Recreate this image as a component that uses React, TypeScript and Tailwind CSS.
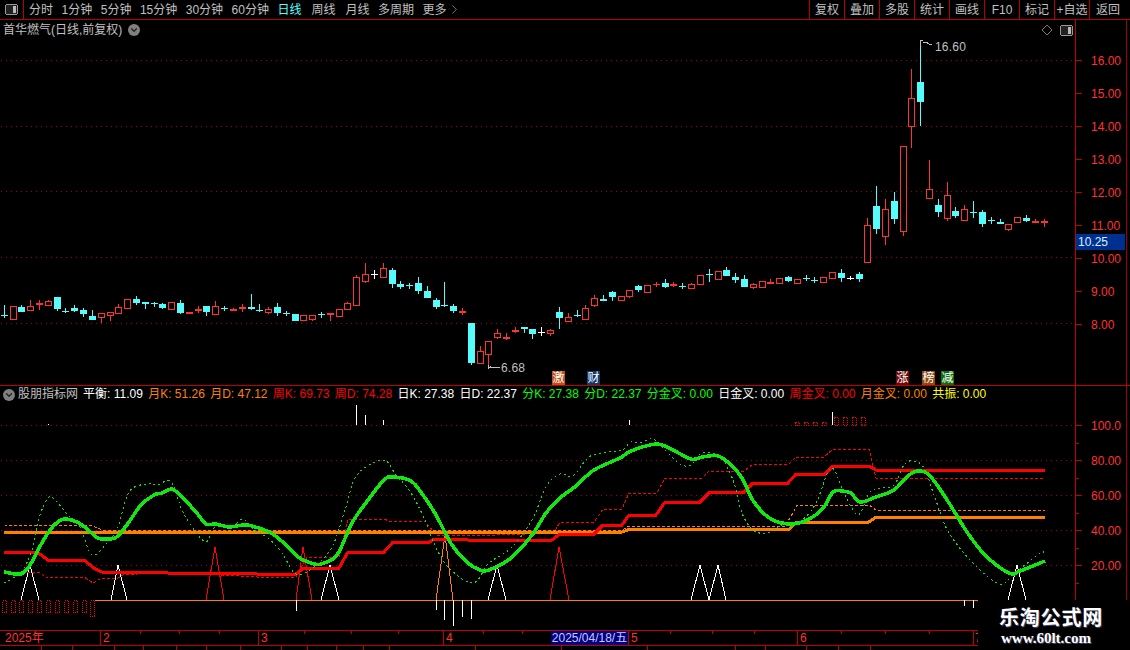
import { ChevronDown, ChevronRight } from "lucide-react";

type Candle = [number, number, number, number, number, string];

// x, bodyTop, bodyBottom, wickTop, wickBottom, c = cyan / r = red / w = white
const candles: Candle[] = [
  [4, 315, 316, 305, 318, "c"], [13, 306, 319, 306, 319, "r"], [21, 307, 312, 305, 312, "c"], [30, 306, 310, 300, 310, "r"],
  [39, 303, 305, 300, 310, "r"], [48, 301, 305, 300, 306, "r"], [57, 297, 309, 297, 311, "c"], [65, 311, 311, 308, 313, "c"],
  [74, 308, 311, 305, 312, "c"], [83, 310, 314, 308, 317, "c"], [92, 316, 320, 310, 320, "c"], [101, 313, 317, 313, 323, "r"],
  [110, 312, 315, 312, 321, "r"], [118, 307, 313, 304, 313, "r"], [127, 299, 308, 299, 308, "r"], [136, 299, 303, 296, 305, "c"],
  [145, 302, 304, 302, 309, "c"], [154, 303, 303, 302, 307, "c"], [162, 304, 308, 303, 309, "c"], [171, 302, 309, 302, 310, "r"],
  [180, 303, 313, 300, 314, "c"], [189, 312, 314, 312, 314, "r"], [198, 309, 311, 306, 313, "r"], [206, 306, 312, 306, 316, "c"],
  [215, 306, 314, 301, 314, "r"], [224, 308, 308, 306, 311, "c"], [233, 309, 311, 308, 311, "r"], [242, 307, 309, 304, 312, "r"],
  [251, 307, 309, 294, 310, "c"], [259, 310, 310, 304, 312, "c"], [268, 309, 312, 307, 314, "r"], [277, 307, 313, 303, 316, "c"],
  [286, 313, 313, 311, 316, "c"], [295, 314, 321, 314, 321, "c"], [303, 315, 320, 315, 320, "r"], [312, 315, 319, 315, 321, "r"],
  [321, 314, 314, 312, 318, "c"], [330, 313, 315, 313, 321, "r"], [339, 309, 316, 309, 316, "r"], [347, 303, 309, 302, 309, "r"],
  [356, 277, 305, 275, 306, "r"], [365, 274, 281, 263, 283, "r"], [374, 274, 274, 270, 279, "w"], [383, 268, 277, 263, 278, "r"],
  [392, 270, 284, 268, 288, "c"], [400, 284, 287, 281, 289, "c"], [409, 285, 285, 283, 289, "c"], [418, 283, 291, 277, 294, "c"],
  [427, 291, 298, 286, 298, "c"], [436, 300, 307, 298, 309, "c"], [444, 305, 305, 282, 307, "c"], [453, 306, 311, 304, 313, "c"],
  [462, 311, 313, 308, 315, "r"], [471, 323, 363, 323, 365, "c"], [480, 351, 363, 346, 363, "r"], [488, 341, 354, 341, 367, "r"],
  [497, 333, 337, 329, 339, "r"], [506, 337, 339, 333, 340, "r"], [515, 330, 332, 327, 333, "r"], [524, 327, 329, 327, 333, "c"],
  [532, 329, 334, 329, 339, "c"], [541, 332, 332, 327, 336, "w"], [550, 330, 333, 329, 336, "r"], [559, 312, 318, 307, 329, "c"],
  [568, 317, 321, 313, 321, "r"], [577, 315, 315, 310, 317, "c"], [585, 308, 319, 305, 319, "r"], [594, 298, 305, 295, 307, "r"],
  [603, 299, 301, 295, 301, "c"], [612, 292, 297, 291, 301, "c"], [621, 296, 300, 296, 300, "r"], [629, 290, 296, 290, 298, "r"],
  [638, 286, 290, 285, 292, "c"], [647, 285, 292, 285, 293, "r"], [656, 284, 284, 282, 287, "r"], [665, 283, 287, 279, 288, "c"],
  [673, 284, 286, 282, 287, "r"], [682, 286, 286, 283, 289, "c"], [691, 284, 288, 283, 288, "r"], [700, 275, 284, 275, 284, "r"],
  [709, 274, 274, 269, 282, "c"], [718, 271, 279, 271, 280, "r"], [726, 270, 276, 267, 276, "c"], [735, 277, 280, 273, 283, "c"],
  [744, 279, 287, 275, 287, "c"], [753, 284, 287, 283, 289, "r"], [762, 281, 287, 281, 288, "r"], [770, 282, 284, 279, 284, "r"],
  [779, 278, 283, 278, 284, "r"], [788, 277, 281, 276, 282, "c"], [797, 279, 283, 279, 283, "r"], [806, 278, 278, 275, 281, "c"],
  [814, 280, 280, 277, 283, "c"], [823, 277, 282, 277, 282, "r"], [832, 272, 278, 272, 279, "r"], [841, 273, 278, 269, 282, "c"],
  [850, 278, 278, 276, 280, "w"], [859, 274, 279, 272, 282, "c"], [867, 225, 262, 218, 262, "r"], [876, 206, 229, 186, 234, "c"],
  [885, 209, 236, 199, 245, "r"], [894, 201, 219, 192, 224, "c"], [903, 146, 231, 146, 236, "r"], [911, 98, 126, 69, 148, "r"],
  [920, 82, 102, 40, 126, "c"], [929, 189, 198, 160, 198, "r"], [938, 205, 212, 199, 217, "c"], [947, 195, 218, 182, 221, "r"],
  [955, 211, 216, 207, 218, "c"], [964, 209, 220, 205, 221, "r"], [973, 212, 212, 201, 218, "c"], [982, 212, 224, 210, 227, "c"],
  [991, 220, 220, 217, 224, "c"], [1000, 222, 224, 219, 224, "c"], [1008, 224, 229, 224, 231, "r"], [1017, 217, 222, 217, 222, "r"],
  [1026, 218, 221, 215, 222, "c"], [1035, 221, 223, 219, 223, "r"], [1044, 221, 223, 219, 227, "r"],
];

const colors: Record<string, string> = { c: "#54fcfc", r: "#ff3232", w: "#ffffff" };

const greenBold =
  "4,572 21,574 30,565 39,548 50,530 59,521 66,519 77,522 86,528 98,538 111,539 118,536 129,522 141,505 154,495 162,493 172,489 182,497 196,512 206,524 216,524 229,527 243,525 252,526 271,533 286,545 298,557 311,563 321,564 337,555 352,523 368,500 384,480 393,477 411,481 423,495 436,515 452,545 468,563 480,570 489,570 511,558 532,535 546,513 560,498 576,486 594,470 620,458 631,451 656,444 669,448 691,459 702,457 718,456 731,465 742,478 754,502 771,519 793,524 811,518 824,507 833,492 842,491 851,493 860,502 876,497 894,490 909,475 920,471 931,477 949,503 967,532 985,555 1009,573 1020,571 1045,561";
const greenThin =
  "4,583 21,572 32,550 39,518 48,498 54,499 68,515 80,527 92,555 107,543 118,527 129,492 146,484 157,485 171,482 182,510 193,528 206,542 214,528 232,527 243,519 254,530 268,538 282,553 296,574 314,567 332,547 345,510 357,475 383,460 396,475 411,493 425,520 434,543 448,567 473,583 489,563 511,548 532,520 546,487 560,474 573,476 589,457 607,452 622,450 631,442 640,443 653,439 664,449 680,464 691,465 702,453 720,457 733,480 742,513 753,530 767,533 782,525 796,525 815,505 831,468 844,493 858,515 869,493 880,488 894,485 904,465 913,461 924,468 935,498 949,533 975,565 1000,584 1015,573 1040,553 1044,553";
const redBold =
  "4,552 37,552 48,560 84,560 95,569 102,572 166,572 168,573 255,573 257,574 296,574 304,568 339,568 348,552 384,552 393,542 430,542 434,539 464,539 468,540 552,540 560,534 594,534 603,525 622,525 629,515 656,515 665,502 700,502 710,492 744,492 753,483 788,483 796,474 825,474 833,466 869,466 876,470 1045,470";
const redThin =
  "7,572 39,572 46,577 84,577 93,583 102,578 118,578 123,575 166,572 257,577 296,577 307,557 339,557 348,519 384,519 389,521 425,521 436,535 466,536 554,533 560,522 594,522 603,509 622,509 629,493 657,493 665,478 702,478 709,471 744,471 753,464 789,464 796,457 824,457 833,449 869,449 876,478 1045,478";
const orangeBold = "4,532 622,532 629,529.5 789,529.5 797,522 869,522 876,517 1045,517";
const orangeThin = "4,525 93,526 102,530 622,530 629,526 785,526 793,513 797,505 869,505 876,510 1045,510";

// left, apex, right, apexY, colour
const triangles: [number, number, number, number, string][] = [
  [21, 30, 39, 565, "#ffffff"], [111, 118, 127, 565, "#ffffff"], [321, 330, 339, 565, "#ffffff"], [488, 497, 506, 565, "#ffffff"],
  [691, 700, 709, 565, "#ffffff"], [709, 718, 726, 565, "#ffffff"], [1008, 1017, 1026, 565, "#ffffff"],
  [206, 215, 224, 547, "#ff0000"], [296, 303, 312, 547, "#ff0000"], [550, 559, 569, 547, "#ff0000"], [436, 445, 453, 535, "#ff8000"],
];

const spikes: [number, number, number][] = [
  [48, 424, 425], [356, 405, 425], [365, 415, 425], [383, 420, 425], [629, 420, 425], [832, 412, 425],
  [296, 600, 611], [436, 600, 610], [444, 600, 620], [453, 600, 626], [462, 600, 617], [471, 600, 619], [964, 600, 606], [973, 600, 608],
];

const lowBars = [2, 11, 19, 28, 37, 46, 55, 64, 73, 82, 90];
const highBars = [795, 804, 813, 822];
const tallBars = [834, 843, 852, 861];

const periods = ["分时", "1分钟", "5分钟", "15分钟", "30分钟", "60分钟"];
const tools = ["复权", "叠加", "多股", "统计", "画线", "F10", "标记", "+自选"];
const prices = ["16.00", "15.00", "14.00", "13.00", "12.00", "11.00", "10.00", "9.00", "8.00"];
const levels = ["100.0", "80.00", "60.00", "40.00", "20.00"];
const minorTicks = [57, 92, 127, 162, 197];

const legend = [
  { text: "平衡: 11.09", cls: "text-white" },
  { text: "月K: 51.26", cls: "text-[#ff8000]" },
  { text: "月D: 47.12", cls: "text-[#ff8000]" },
  { text: "周K: 69.73", cls: "text-[#ff0000]" },
  { text: "周D: 74.28", cls: "text-[#ff0000]" },
  { text: "日K: 27.38", cls: "text-white" },
  { text: "日D: 22.37", cls: "text-white" },
  { text: "分K: 27.38", cls: "text-[#00ff00]" },
  { text: "分D: 22.37", cls: "text-[#00ff00]" },
  { text: "分金叉: 0.00", cls: "text-[#00ff00]" },
  { text: "日金叉: 0.00", cls: "text-white" },
  { text: "周金叉: 0.00", cls: "text-[#ff0000]" },
  { text: "月金叉: 0.00", cls: "text-[#ff8000]" },
  { text: "共振: 0.00", cls: "text-[#ffff00]" },
];

const timeTicks = [140, 179, 219, 304, 351, 398, 483, 522, 670, 712, 754, 841, 885, 929];
const statusCells = [42, 31, 42, 29, 33, 30, 34, 41, 26, 29, 27, 26, 86, 86, 86, 88, 30, 41, 32, 32, 259];

const tags = [
  { text: "激", cls: "left-[552px] bg-[#c0501a]" },
  { text: "财", cls: "left-[587px] bg-[#103a6e]" },
  { text: "涨", cls: "left-[896px] bg-[#6e0a0a]" },
  { text: "榜", cls: "left-[922px] bg-[#8a4a10]" },
  { text: "减", cls: "left-[941px] bg-[#0e6e0e]" },
];

// Catmull-Rom through the sampled points, the green lines are smooth curves
function smooth(points: string) {
  const p = points.split(" ").map((s) => s.split(",").map(Number));
  let d = `M${p[0][0]} ${p[0][1]}`;
  for (let i = 0; i < p.length - 1; i++) {
    const a = p[Math.max(i - 1, 0)];
    const b = p[i];
    const c = p[i + 1];
    const e = p[Math.min(i + 2, p.length - 1)];
    d += `C${b[0] + (c[0] - a[0]) / 6} ${b[1] + (c[1] - a[1]) / 6} ${c[0] - (e[0] - b[0]) / 6} ${c[1] - (e[1] - b[1]) / 6} ${c[0]} ${c[1]}`;
  }
  return d;
}

function PanelIcon() {
  return (
    <svg width="13" height="11" viewBox="0 0 13 11" shapeRendering="crispEdges">
      <rect x="0.5" y="0.5" width="12" height="10" rx="2" fill="#222" stroke="#999" />
      <rect x="8" y="2" width="3" height="7" fill="#bbb" />
    </svg>
  );
}

function Chevron() {
  return (
    <span className="flex h-3 w-3 items-center justify-center rounded-full bg-[#808080]">
      <ChevronDown size={10} strokeWidth={3} color="#222" />
    </span>
  );
}

function CandleMark({ c }: { c: Candle }) {
  const [x, top, bottom, wickTop, wickBottom, kind] = c;
  const color = colors[kind];
  const hollow = kind === "r" && bottom - top > 2;
  return (
    <g>
      <line x1={x + 0.5} x2={x + 0.5} y1={wickTop} y2={wickBottom} stroke={color} />
      {bottom === top ? (
        <rect x={x - 3} y={top} width={7} height={1} fill={color} />
      ) : hollow ? (
        <rect x={x - 2.5} y={top + 0.5} width={6} height={bottom - top} fill="#000" stroke={color} />
      ) : (
        <rect x={x - 3} y={top} width={7} height={bottom - top} fill={color} />
      )}
    </g>
  );
}

function PriceChart() {
  return (
    <svg className="absolute inset-0" width="1075" height="365" viewBox="0 20 1075 365" shapeRendering="crispEdges">
      {[60, 126, 191, 257, 323].map((y) => (
        <line key={y} x1="1" x2="1075" y1={y + 0.5} y2={y + 0.5} stroke="#a00000" strokeDasharray="1 4" />
      ))}
      {candles.map((c) => (
        <CandleMark key={c[0]} c={c} />
      ))}
      <path d="M920 46V40.5H923M923 43L926 42L929 44L932 45" fill="none" stroke="#c0c0c0" />
      <path d="M488 367.5H500M488 365V369M490 366V368" fill="none" stroke="#c0c0c0" />
      <path d="M1047 25L1052 30L1047 35L1042 30Z" fill="none" stroke="#777" shapeRendering="auto" />
    </svg>
  );
}

function IndicatorChart() {
  return (
    <svg className="absolute inset-0" width="1075" height="244" viewBox="0 386 1075 244" shapeRendering="crispEdges">
      {[425, 460, 495, 530, 565].map((y) => (
        <line key={y} x1="1" x2="1075" y1={y + 0.5} y2={y + 0.5} stroke="#a00000" strokeDasharray="1 4" />
      ))}
      {triangles.map(([l, a, r, y, color]) => (
        <polyline key={a} points={`${l},600 ${a},${y} ${r},600`} fill="none" stroke={color} />
      ))}
      <polyline points={orangeThin} fill="none" stroke="#ff8000" strokeDasharray="3 2" />
      <polyline points={redThin} fill="none" stroke="#ff0000" strokeDasharray="3 2" />
      <polyline points={orangeBold} fill="none" stroke="#ff8000" strokeWidth="3" />
      <polyline points={redBold} fill="none" stroke="#ff0000" strokeWidth="3" />
      <path d={smooth(greenThin)} fill="none" stroke="#10e010" strokeDasharray="2 3" />
      <path d={smooth(greenBold)} fill="none" stroke="#10e810" strokeWidth="3.5" strokeLinejoin="round" />
      <line x1="95" x2="978" y1="600.5" y2="600.5" stroke="#ff8000" />
      {lowBars.map((x, i) => (
        <rect key={x} x={x + 0.5} y="600.5" width="4" height={i === 10 ? 16 : 12} fill="none" stroke="#ff0000" strokeDasharray="1 1" />
      ))}
      {highBars.map((x) => (
        <rect key={x} x={x + 0.5} y="422.5" width="4" height="2.5" fill="none" stroke="#ff0000" strokeDasharray="1 1" />
      ))}
      {tallBars.map((x) => (
        <rect key={x} x={x + 0.5} y="417.5" width="4" height="7.5" fill="none" stroke="#ff0000" strokeDasharray="1 1" />
      ))}
      {spikes.map(([x, a, b]) => (
        <line key={x} x1={x + 0.5} x2={x + 0.5} y1={a} y2={b} stroke="#ffffff" />
      ))}
    </svg>
  );
}

function AxisLabel({ text }: { text: string }) {
  return (
    <div className="flex h-full items-center">
      <span className="h-px w-[6px] bg-[#c00000]" />
      <span className="ml-[9px] text-xs text-[#ff3232]">{text}</span>
    </div>
  );
}

export default function App() {
  return (
    <div className="relative flex h-[650px] w-[1130px] flex-col overflow-hidden bg-black text-xs [font-family:'Liberation_Sans','Noto_Sans_CJK_SC',sans-serif]">
      <header className="flex h-5 shrink-0 items-center border-b border-[#b40000] text-[#c0c0c0]">
        <div className="flex h-full w-6 items-center justify-center border-r border-[#b40000]">
          <PanelIcon />
        </div>
        <nav className="ml-[5px] flex items-center gap-[8.5px]">
          {periods.map((p) => (
            <span key={p}>{p}</span>
          ))}
          <div className="flex items-center gap-[10px]">
            <span className="text-[#55ffff]">日线</span>
            <span>周线</span>
            <span>月线</span>
          </div>
          <span>多周期</span>
          <span className="flex items-center">
            更多
            <ChevronRight size={15} strokeWidth={1} />
          </span>
        </nav>
        <div className="ml-auto flex h-full">
          {tools.map((t) => (
            <span key={t} className="flex h-full w-[35px] items-center justify-center border-l border-[#b40000]">
              {t}
            </span>
          ))}
          <span className="flex h-full w-[41px] items-center justify-center border-l border-[#b40000] pr-1">返回</span>
        </div>
      </header>

      <section className="flex h-[365px] shrink-0">
        <div className="relative w-[1075px] shrink-0">
          <PriceChart />
          <div className="relative flex items-center gap-[6px] pl-[3px] pt-[2px] text-[#c0c0c0]">
            <span>首华燃气(日线,前复权)</span>
            <Chevron />
          </div>
          <div className="absolute left-[1060px] top-[5px]">
            <PanelIcon />
          </div>
          <span className="absolute left-[935px] top-[19px] tracking-[0.2px] text-[#c0c0c0]">16.60</span>
          <span className="absolute left-[501px] top-[340px] tracking-[0.2px] text-[#c0c0c0]">6.68</span>
          {tags.map((t) => (
            <span
              key={t.text}
              className={`absolute top-[351px] flex h-[14px] w-[13px] items-center justify-center text-xs leading-none text-white ${t.cls}`}
            >
              {t.text}
            </span>
          ))}
        </div>
        <div className="relative flex-1 border-l border-[#c00000] pt-[24px]">
          {prices.map((p) => (
            <div key={p} className="h-[33px]">
              <AxisLabel text={p} />
            </div>
          ))}
          <span className="absolute left-0 top-[214px] flex h-4 w-[49px] items-center bg-[#00308f] pl-[2px] text-[#d8f0ff]">10.25</span>
          <span className="absolute bottom-0 left-[50px] top-0 w-px bg-[#a00000]" />
        </div>
      </section>

      <section className="flex h-[245px] shrink-0 border-t border-[#c00000]">
        <div className="relative w-[1075px] shrink-0">
          <IndicatorChart />
          <div className="relative flex items-center whitespace-nowrap pl-[3px] pt-px leading-[15px]">
            <Chevron />
            <span className="ml-[3px] mr-[5px] text-[#c0c0c0]">股朋指标网</span>
            <div className="flex gap-[5.3px]">
              {legend.map((l) => (
                <span key={l.text} className={l.cls}>
                  {l.text}
                </span>
              ))}
            </div>
          </div>
        </div>
        <div className="relative flex-1 border-l border-[#c00000] pt-[22px]">
          {levels.map((l) => (
            <div key={l} className="h-[35px]">
              <AxisLabel text={l} />
            </div>
          ))}
          {minorTicks.map((y) => (
            <span key={y} className="absolute left-0 h-px w-[3px] bg-[#c00000]" style={{ top: y }} />
          ))}
          <span className="absolute bottom-0 left-[50px] top-0 w-px bg-[#a00000]" />
        </div>
      </section>

      <footer className="relative flex h-4 shrink-0 border-y border-[#c00000] leading-[14px] text-[#ff3232]">
        <span className="w-[100px] pl-[5px]">2025年</span>
        <span className="w-[158px] border-l border-[#c00000] pl-[2px]">2</span>
        <span className="w-[185px] border-l border-[#c00000] pl-[2px]">3</span>
        <span className="w-[108px] border-l border-[#c00000] pl-[2px]">4</span>
        <span className="w-[77px] bg-[#000080] text-center text-[#c8c8ff]">2025/04/18/五</span>
        <span className="w-[169px] border-l border-[#c00000] pl-[2px]">5</span>
        <span className="w-[176px] border-l border-[#c00000] pl-[2px]">6</span>
        <span className="w-[157px] border-l border-[#c00000] pl-px">7</span>
        {timeTicks.map((x) => (
          <span key={x} className="absolute top-0 h-[3px] w-px bg-[#c00000]" style={{ left: x }} />
        ))}
      </footer>

      <div className="flex flex-1">
        {statusCells.map((w, i) => (
          <span key={i} className="border-r border-[#c00000]" style={{ width: w }} />
        ))}
      </div>

      <div className="absolute bottom-0 right-0 flex h-[50px] w-[152px] flex-col items-start bg-black pl-[21px] text-white">
        <span className="mt-[6px] text-xl font-bold leading-[24px] tracking-[0.8px] [text-shadow:1px_1px_0_#446]">乐淘公式网</span>
        <span className="ml-[2px] text-[15px] font-bold leading-[17px] [font-family:'Liberation_Serif',serif] [text-shadow:1px_1px_0_#446]">www.60lt.com</span>
      </div>
    </div>
  );
}
